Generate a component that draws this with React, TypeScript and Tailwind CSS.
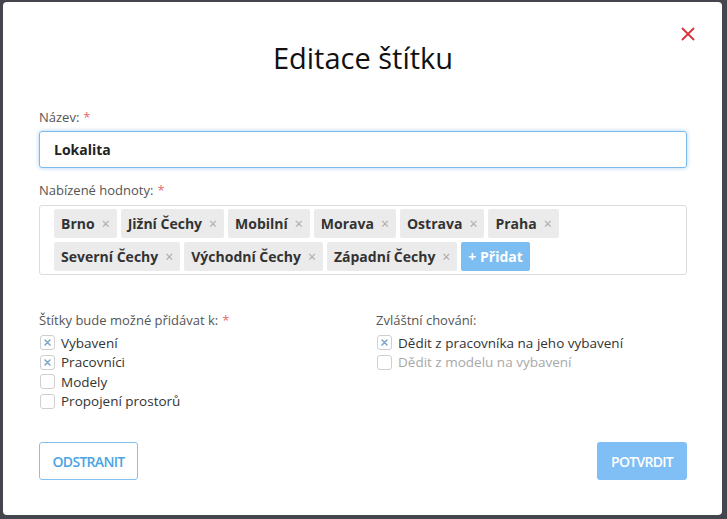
import React from 'react';

const tags = [
  'Brno',
  'Jižní Čechy',
  'Mobilní',
  'Morava',
  'Ostrava',
  'Praha',
  'Severní Čechy',
  'Východní Čechy',
  'Západní Čechy',
];

const Req = () => <span className="text-[#e26b6b] ml-1">*</span>;

const Check = ({ label, checked, disabled }: { label: string; checked?: boolean; disabled?: boolean }) => (
  <div className="flex items-center h-[19.5px]">
    <span className="w-[15px] h-[15px] ml-px rounded-[3px] border border-[#cfcfcf] bg-white flex items-center justify-center">
      {checked && (
        <svg width="7" height="7" viewBox="0 0 7 7">
          <path d="M1 1L6 6M6 1L1 6" stroke="#7fa9c8" strokeWidth="1.6" strokeLinecap="round" />
        </svg>
      )}
    </span>
    <span className={`ml-[6px] text-[13.5px] ${disabled ? 'text-[#a8a8a8]' : 'text-[#333]'}`}>{label}</span>
  </div>
);

export default function App() {
  return (
    <div className="w-[727px] h-[519px] bg-[#44454d] pt-[2px] pl-[3px]" style={{ fontFamily: '"Open Sans", sans-serif' }}>
      <div className="relative w-[719px] h-[513px] bg-white rounded-[4px] pl-[36px] pr-[35px] pt-[36px] pb-[35px] flex flex-col">
        <button className="absolute top-[25px] right-[27px] w-[14px] h-[14px]">
          <svg width="14" height="14" viewBox="0 0 14 14">
            <path d="M1 1L13 13M13 1L1 13" stroke="#d8323c" strokeWidth="1.8" />
          </svg>
        </button>
        <h1 className="text-center text-[29px] leading-[40px] text-[#111] font-normal">Editace štítku</h1>

        <label className="mt-[30px] text-[13px] leading-[18px] text-[#555]">
          Název:<Req />
        </label>
        <div className="mt-[5px] h-[37px] rounded-[3px] border border-[#7db9ea] shadow-[0_0_4px_rgba(100,170,230,0.55)] flex items-center px-[14px] text-[14px] font-bold text-[#222]">
          Lokalita
        </div>

        <label className="mt-[13px] text-[13px] leading-[18px] text-[#555]">
          Nabízené hodnoty:<Req />
        </label>
        <div className="mt-[6px] h-[70px] rounded-[3px] border border-[#dcdcdc] pl-[14px] pr-[10px] pt-[3px] flex flex-wrap content-start gap-[4px]">
          {tags.map((t) => (
            <span key={t} className="h-[29px] bg-[#ebebeb] rounded-[2px] pl-[7px] pr-[7px] flex items-center text-[14px] font-bold text-[#333]">
              {t}
              <span className="ml-[7px] text-[#a9a9a9] font-normal text-[14px]">×</span>
            </span>
          ))}
          <span className="h-[29px] bg-[#7cbdf2] rounded-[2px] px-[7px] flex items-center text-[14px] font-bold text-white">
            + Přidat
          </span>
        </div>

        <div className="mt-[36px] grid grid-cols-2 gap-x-[26px]">
          <div>
            <div className="text-[13px] leading-[18px] text-[#555]">
              Štítky bude možné přidávat k:<Req />
            </div>
            <div className="mt-[4px]">
              <Check label="Vybavení" checked />
              <Check label="Pracovníci" checked />
              <Check label="Modely" />
              <Check label="Propojení prostorů" />
            </div>
          </div>
          <div>
            <div className="text-[13px] leading-[18px] text-[#555]">Zvláštní chování:</div>
            <div className="mt-[4px]">
              <Check label="Dědit z pracovníka na jeho vybavení" checked />
              <Check label="Dědit z modelu na vybavení" disabled />
            </div>
          </div>
        </div>

        <div className="mt-auto flex justify-between">
          <button className="h-[38px] w-[99px] rounded-[3px] border border-[#86c0ee] text-[#4ba3e3] text-[14px] font-semibold tracking-[-0.7px]">
            ODSTRANIT
          </button>
          <button className="h-[38px] w-[90px] rounded-[3px] bg-[#7fbff5] text-white text-[14px] font-semibold tracking-[-0.7px]">
            POTVRDIT
          </button>
        </div>
      </div>
    </div>
  );
}
